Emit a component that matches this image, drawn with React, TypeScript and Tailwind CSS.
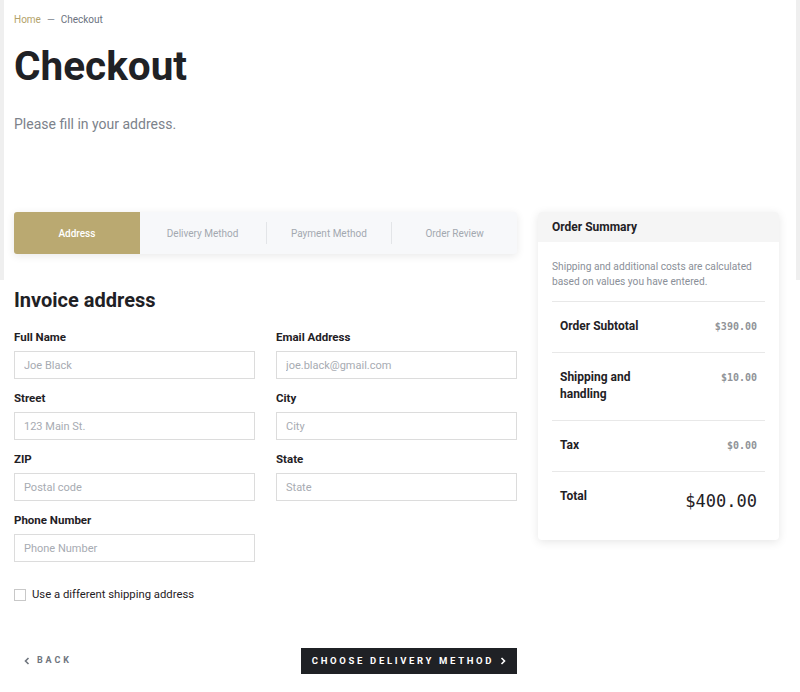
import React from 'react';

const steps = ['Address', 'Delivery Method', 'Payment Method', 'Order Review'];

const fields = [
  { label: 'Full Name', placeholder: 'Joe Black' },
  { label: 'Email Address', placeholder: 'joe.black@gmail.com' },
  { label: 'Street', placeholder: '123 Main St.' },
  { label: 'City', placeholder: 'City' },
  { label: 'ZIP', placeholder: 'Postal code' },
  { label: 'State', placeholder: 'State' },
  { label: 'Phone Number', placeholder: 'Phone Number' },
];

const summary = [
  { label: 'Order Subtotal', value: '$390.00' },
  { label: 'Shipping and handling', value: '$10.00' },
  { label: 'Tax', value: '$0.00' },
];

function Steps() {
  return (
    <div className="flex h-[42px] overflow-hidden rounded-[3px] bg-[#f7f8fa] shadow-[0_2px_8px_rgba(0,0,0,0.09)]">
      {steps.map((s, i) => (
        <div
          key={s}
          className={
            i === 0
              ? 'flex flex-1 items-center justify-center bg-[#baa971] text-[10px] font-medium text-white'
              : 'flex flex-1 items-center justify-center text-[10px] text-[#a3a8b0]'
          }
        >
          {i > 1 && <span className="mr-auto h-[22px] border-l border-[#e3e5e8]" />}
          <span className={i > 1 ? 'mr-auto' : ''}>{s}</span>
        </div>
      ))}
    </div>
  );
}

function Field({ label, placeholder }: { label: string; placeholder: string }) {
  return (
    <div>
      <label className="mb-[6px] block text-[11.5px] font-bold leading-[16px] text-[#1f2125]">{label}</label>
      <input
        className="block h-[28px] w-full border border-[#dcdcdc] px-[9px] text-[11px] text-[#1f2125] outline-none placeholder:text-[#a7abb2]"
        placeholder={placeholder}
      />
    </div>
  );
}

function OrderSummary() {
  return (
    <div className="w-[241px] shrink-0 self-start overflow-hidden rounded-[4px] bg-white shadow-[0_2px_10px_rgba(0,0,0,0.1)]">
      <div className="flex h-[30px] items-center bg-[#f5f5f5] px-[14px] text-[12px] font-bold text-[#1f2125]">
        Order Summary
      </div>
      <div className="px-[14px]">
        <p className="mb-[12px] pt-[17px] text-[10.2px] leading-[15px] text-[#8a8f98]">
          Shipping and additional costs are calculated based on values you have entered.
        </p>
        {summary.map((r) => (
          <div key={r.label} className="flex items-start justify-between border-t border-[#e8e8e8] px-[8px] pb-[17px] pt-[16px]">
            <span className="w-[100px] text-[12px] font-bold leading-[17px] text-[#1f2125]">{r.label}</span>
            <span className="font-['DejaVu_Sans_Mono',monospace] text-[10px] font-bold leading-[17px] text-[#909398]">
              {r.value}
            </span>
          </div>
        ))}
        <div className="flex items-start justify-between border-t border-[#e8e8e8] px-[8px] pb-[27px] pt-[16px]">
          <span className="text-[12px] font-bold leading-[17px] text-[#1f2125]">Total</span>
          <span className="mt-[1px] font-['DejaVu_Sans_Mono',monospace] text-[17px] leading-[24px] text-[#1f2125]">
            $400.00
          </span>
        </div>
      </div>
    </div>
  );
}

export default function App() {
  return (
    <div className="relative min-h-screen bg-white font-['Roboto',sans-serif]">
      <div className="pointer-events-none absolute inset-x-0 top-0 h-[280px] border-x-4 border-[#efefef]" />
      <div className="relative px-[14px] pt-[13px]">
        <div className="flex gap-[6px] text-[10px] leading-[14px]">
          <span className="text-[#b3a26a]">Home</span>
          <span className="text-[#8a8f98]">—</span>
          <span className="text-[#6b7280]">Checkout</span>
        </div>
        <h1 className="mt-[15px] text-[40.5px] font-bold leading-[48px] text-[#1f2125]">Checkout</h1>
        <p className="mt-[24px] text-[14px] leading-[20px] text-[#7c828b]">Please fill in your address.</p>

        <div className="mt-[78px] flex gap-[21px]">
          <div className="w-[503px] shrink-0">
            <Steps />
            <h2 className="mt-[34px] text-[20px] font-bold leading-[24px] text-[#1f2125]">Invoice address</h2>
            <div className="mt-[17px] grid grid-cols-2 gap-x-[21px] gap-y-[11px]">
              {fields.map((f) => (
                <Field key={f.label} {...f} />
              ))}
            </div>
            <label className="mt-[25px] flex items-center gap-[6px] text-[11.3px] leading-[16px] text-[#1f2125]">
              <input type="checkbox" className="h-[12px] w-[12px] appearance-none border border-[#c8c8c8] bg-white" />
              Use a different shipping address
            </label>
            <div className="mt-[45px] flex items-center justify-between">
              <button className="flex items-center gap-[7px] pl-[10px] text-[9px] font-bold tracking-[0.32em] text-[#6f757e]">
                <svg width="6" height="8" viewBox="0 0 6 8" fill="none" stroke="currentColor" strokeWidth="1.6">
                  <path d="M4.5 1 1.5 4l3 3" />
                </svg>
                BACK
              </button>
              <button className="flex h-[26px] w-[216px] items-center justify-center gap-[6px] bg-[#1f2125] text-[9.5px] font-bold tracking-[0.28em] text-white">
                CHOOSE DELIVERY METHOD
                <svg width="6" height="8" viewBox="0 0 6 8" fill="none" stroke="currentColor" strokeWidth="1.6">
                  <path d="M1.5 1 4.5 4l-3 3" />
                </svg>
              </button>
            </div>
          </div>
          <OrderSummary />
        </div>
      </div>
    </div>
  );
}
